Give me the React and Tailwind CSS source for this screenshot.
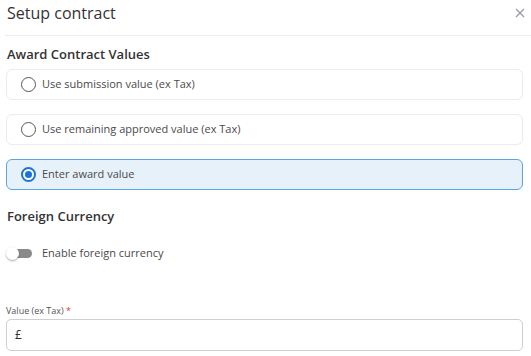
import React from "react";

const font = { fontFamily: '"Open Sans", "Noto Sans", sans-serif' };

function Radio({ checked }) {
  return checked ? (
    <span className="flex h-[15px] w-[15px] shrink-0 items-center justify-center rounded-full border-[2px] border-[#1a73d9] bg-white">
      <span className="h-[7px] w-[7px] rounded-full bg-[#1a73d9]" />
    </span>
  ) : (
    <span className="h-[15px] w-[15px] shrink-0 rounded-full border-[1.5px] border-[#555] bg-white" />
  );
}

function Option({ label, checked }) {
  return (
    <div
      className={
        "flex h-[31px] items-center gap-[6px] rounded-[6px] border pl-[14px] " +
        (checked ? "border-[#5ba2e6] bg-[#e7f1fa]" : "border-[#ebebf0] bg-white")
      }
    >
      <Radio checked={checked} />
      <span className="text-[11px] text-[#4a4a4a]">{label}</span>
    </div>
  );
}

export default function App() {
  return (
    <div className="h-[356px] w-[531px] overflow-hidden bg-white" style={font}>
      <div className="flex h-[35px] items-start justify-between pl-[7px] pr-[6px] pt-[1px]">
        <h1 className="text-[16px] font-medium leading-[24px] text-[#333]">Setup contract</h1>
        <svg width="10" height="10" viewBox="0 0 10 10" className="mt-[7px]" stroke="#9a9aa6" strokeWidth="1.3">
          <path d="M1 1 L9 9 M9 1 L1 9" />
        </svg>
      </div>
      <div className="ml-[5px] h-[1px] bg-[#ececec]" />
      <div className="px-[6px]">
        <h2 className="mt-[9px] pl-[1px] text-[13px] font-semibold leading-[18px] text-[#333]">Award Contract Values</h2>
        <div className="mr-[2px] mt-[6px] flex flex-col gap-[14px]">
          <Option label="Use submission value (ex Tax)" />
          <Option label="Use remaining approved value (ex Tax)" />
          <Option label="Enter award value" checked />
        </div>
        <h2 className="mt-[17px] pl-[1px] text-[13px] font-semibold leading-[18px] text-[#333]">Foreign Currency</h2>
        <div className="mt-[21px] flex h-[14px] items-center gap-[9px]">
          <div className="relative h-[13px] w-[27px]">
            <div className="absolute left-[7px] top-[2px] h-[9px] w-[19px] rounded-full bg-[#8a8a8a]" />
            <div className="absolute left-0 top-0 h-[13px] w-[13px] rounded-full bg-white shadow-[0_1px_2px_rgba(0,0,0,0.35)]" />
          </div>
          <span className="text-[11px] text-[#4a4a4a]">Enable foreign currency</span>
        </div>
        <div className="mt-[45px] text-[9px] font-medium leading-[12px] text-[#555]">
          Value (ex Tax) <span className="text-[#e53935]">*</span>
        </div>
        <div className="mr-[2px] mt-[2px] flex h-[32px] items-center rounded-[5px] border border-[#cfcfcf] pl-[8px]">
          <span className="text-[12px] font-medium text-[#333]">£</span>
        </div>
      </div>
    </div>
  );
}
